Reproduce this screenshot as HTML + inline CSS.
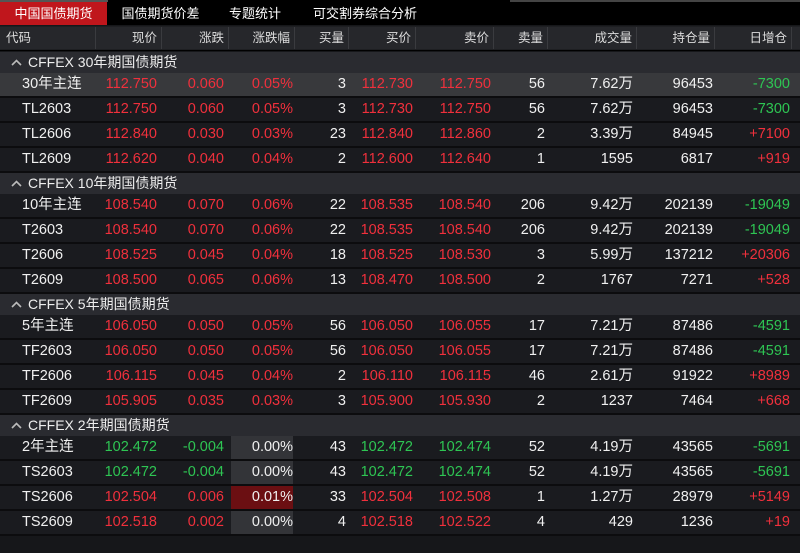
<!DOCTYPE html><html><head><meta charset="utf-8"><style>
body{margin:0;width:800px;height:553px;background:#16171a;font-family:"Liberation Sans","Noto Sans CJK SC",sans-serif;overflow:hidden;position:relative;color:#e8e8e8}
.tabs{position:absolute;left:0;top:0;width:800px;height:25px;background:#000}
.strip{position:absolute;top:0;height:2px;background:#555}
.tab{position:absolute;top:2px;height:23px;line-height:23px;font-size:13px;color:#fff;text-align:center}
.hdr{position:absolute;top:26px;left:0;width:800px;height:24px;background:#1e1f22;border-bottom:1px solid #000}
.hc{position:absolute;top:1px;height:22px;line-height:22px;font-size:12.5px;background:#26272b;border-right:1px solid #3a3b3f;box-sizing:border-box;text-align:right;padding-right:4px;color:#ddd}
.grp{position:absolute;left:0;width:800px;height:21px;background:#2a2b30;font-size:14px;line-height:21px;color:#eee}
.grp svg{position:absolute;left:11px;top:7px}
.grp b{font-weight:normal;position:absolute;left:28px}
.row{position:absolute;left:0;width:800px;height:25px;background:#1a1b1f;border-bottom:2px solid #0c0c0e;box-sizing:border-box;font-size:14.5px;line-height:23px}
.row.sel{background:#38393c}
.c{position:absolute;top:0;height:23px;text-align:right;white-space:nowrap}
.r{color:#f0303c}.g{color:#2ec553}.w{color:#f0f0f0}
.pb{position:absolute;left:231px;width:62px;top:0;height:23px}
</style></head><body>
<div class="tabs">
<div class="strip" style="left:0;width:108px"></div>
<div class="strip" style="left:510px;width:290px;background:#444"></div>
<div class="tab" style="left:0;width:107px;background:#c0161c">中国国债期货</div>
<div class="tab" style="left:113px;width:95px">国债期货价差</div>
<div class="tab" style="left:215px;width:80px">专题统计</div>
<div class="tab" style="left:305px;width:120px">可交割券综合分析</div>
</div>
<div class="hdr">
<div class="hc" style="left:0;width:96px;text-align:left;padding-left:6px">代码</div>
<div class="hc" style="left:96px;width:66px">现价</div>
<div class="hc" style="left:162px;width:67px">涨跌</div>
<div class="hc" style="left:229px;width:66px">涨跌幅</div>
<div class="hc" style="left:295px;width:54px">买量</div>
<div class="hc" style="left:349px;width:67px">买价</div>
<div class="hc" style="left:416px;width:78px">卖价</div>
<div class="hc" style="left:494px;width:54px">卖量</div>
<div class="hc" style="left:548px;width:89px">成交量</div>
<div class="hc" style="left:637px;width:78px">持仓量</div>
<div class="hc" style="left:715px;width:77px">日增仓</div>
<div class="hc" style="left:792px;width:8px;border:none"></div>
</div>
<div id="b"></div>
<script>
const groups=[
[52,"CFFEX 30年期国债期货",[
["30年主连","r","112.750","0.060","0.05%","3","112.730","112.750","56","7.62万","96453","-7300","",1],
["TL2603","r","112.750","0.060","0.05%","3","112.730","112.750","56","7.62万","96453","-7300",""],
["TL2606","r","112.840","0.030","0.03%","23","112.840","112.860","2","3.39万","84945","+7100",""],
["TL2609","r","112.620","0.040","0.04%","2","112.600","112.640","1","1595","6817","+919",""]]],
[173,"CFFEX 10年期国债期货",[
["10年主连","r","108.540","0.070","0.06%","22","108.535","108.540","206","9.42万","202139","-19049",""],
["T2603","r","108.540","0.070","0.06%","22","108.535","108.540","206","9.42万","202139","-19049",""],
["T2606","r","108.525","0.045","0.04%","18","108.525","108.530","3","5.99万","137212","+20306",""],
["T2609","r","108.500","0.065","0.06%","13","108.470","108.500","2","1767","7271","+528",""]]],
[294,"CFFEX 5年期国债期货",[
["5年主连","r","106.050","0.050","0.05%","56","106.050","106.055","17","7.21万","87486","-4591",""],
["TF2603","r","106.050","0.050","0.05%","56","106.050","106.055","17","7.21万","87486","-4591",""],
["TF2606","r","106.115","0.045","0.04%","2","106.110","106.115","46","2.61万","91922","+8989",""],
["TF2609","r","105.905","0.035","0.03%","3","105.900","105.930","2","1237","7464","+668",""]]],
[415,"CFFEX 2年期国债期货",[
["2年主连","g","102.472","-0.004","0.00%","43","102.472","102.474","52","4.19万","43565","-5691","#333438"],
["TS2603","g","102.472","-0.004","0.00%","43","102.472","102.474","52","4.19万","43565","-5691","#333438"],
["TS2606","r","102.504","0.006","0.01%","33","102.504","102.508","1","1.27万","28979","+5149","#6b0f12"],
["TS2609","r","102.518","0.002","0.00%","4","102.518","102.522","4","429","1236","+19","#333438"]]]];
const R=[157,224,293,346,413,491,545,633,713,790];
let h="";
for(const [y,t,rows] of groups){
h+=`<div class="grp" style="top:${y}px"><svg width="11" height="7" viewBox="0 0 11 7"><path d="M1 6 L5.5 1.5 L10 6" fill="none" stroke="#bbb" stroke-width="1.6"/></svg><b>${t}</b></div>`;
rows.forEach((r,i)=>{const top=y+21+i*25;
h+=`<div class="row${r[13]?' sel':''}" style="top:${top}px">`;
if(r[12])h+=`<div class="pb" style="background:${r[12]}"></div>`;
h+=`<div class="c w" style="left:22px;text-align:left">${r[0]}</div>`;
const cls=[r[1],r[1],r[12]?'w':r[1],'w',r[1],r[1],'w','w','w',r[11][0]=='-'?'g':'r'];
const v=[r[2],r[3],r[4],r[5],r[6],r[7],r[8],r[9],r[10],r[11]];
v.forEach((x,j)=>{h+=`<div class="c ${cls[j]}" style="right:${800-R[j]}px">${x}</div>`});
h+=`</div>`;});
}
document.getElementById('b').innerHTML=h;
</script>
</body></html>
